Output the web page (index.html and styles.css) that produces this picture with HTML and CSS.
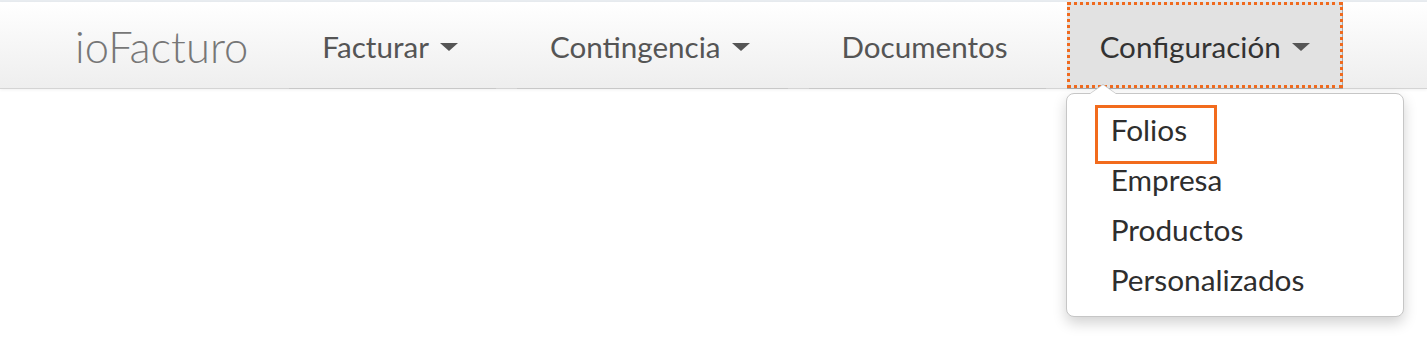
FILE: index.html
```html
<!DOCTYPE html>
<html lang="es">
<head>
<meta charset="utf-8">
<title>ioFacturo</title>
<link rel="stylesheet" href="styles.css">
</head>
<body>
<div class="topband"></div>
<nav class="navbar">
  <a class="brand" href="#">ioFacturo</a>
  <ul class="nav">
    <li class="nav-item"><a href="#">Facturar<span class="caret"></span></a></li>
    <li class="nav-item"><a href="#">Contingencia<span class="caret"></span></a></li>
    <li class="nav-item"><a href="#">Documentos</a></li>
    <li class="nav-item active"><a href="#">Configuración<span class="caret"></span></a>
      <ul class="dropdown">
        <li class="dd-item highlighted"><a href="#">Folios</a><span class="annot"></span></li>
        <li class="dd-item"><a href="#">Empresa</a></li>
        <li class="dd-item"><a href="#">Productos</a></li>
        <li class="dd-item"><a href="#">Personalizados</a></li>
      </ul>
    </li>
  </ul>
</nav>
</body>
</html>
```

FILE: styles.css
```css
* { box-sizing: border-box; }
html, body { margin: 0; padding: 0; background: #fff; }
body { font-family: Lato, "Open Sans", sans-serif; width: 1427px; height: 352px; overflow: hidden; }
a { text-decoration: none; color: inherit; }
ul { list-style: none; margin: 0; padding: 0; }

.topband { height: 2px; background: #e8ecf0; }

.navbar {
  display: flex;
  align-items: stretch;
  height: 87px;
  padding-left: 75px;
  background: linear-gradient(#ffffff 0%, #f8f8f8 40%, #eeeeee 100%);
  border-bottom: 1px solid #d4d4d4;
  box-shadow: 0 1px 3px rgba(0,0,0,0.06);
}

.brand {
  font-weight: 300;
  font-size: 43.5px;
  color: #777;
  line-height: 88px;
  margin-right: 41px;
}

.nav { display: flex; gap: 21px; }

.nav-item { position: relative; border-bottom: 1px solid #c8c8c8; margin-bottom: -1px; }
.nav-item > a {
  display: flex;
  align-items: center;
  height: 86px;
  padding: 3px 38px 0 33px;
  font-size: 29.6px;
  color: #555;
}

.caret {
  display: inline-block;
  width: 0; height: 0;
  margin-left: 11px;
  border-left: 9px solid transparent;
  border-right: 9px solid transparent;
  border-top: 8px solid #555;
}

.nav-item.active { border-bottom-color: #a8a8a8; }
.nav-item.active > a {
  background: #e2e2e2;
  color: #333;
  padding-left: 33px;
  padding-right: 33px;
  outline: 3px dotted #f06a1e;
  outline-offset: -3px;
  box-shadow: inset -1px 0 0 #a8a8a8;
}

.dropdown {
  position: absolute;
  top: 91px;
  left: -1px;
  width: 338px;
  padding: 11px 0;
  background: #fff;
  border: 1px solid #c6c6c6;
  border-radius: 8px;
  box-shadow: 0 6px 14px rgba(0,0,0,0.18);
}
.dropdown::before {
  content: "";
  position: absolute;
  top: -10px;
  left: 22px;
  border-left: 14px solid transparent;
  border-right: 14px solid transparent;
  border-bottom: 10px solid #c6c6c6;
}
.dropdown::after {
  content: "";
  position: absolute;
  top: -9px;
  left: 23px;
  border-left: 13px solid transparent;
  border-right: 13px solid transparent;
  border-bottom: 9px solid #fff;
}

.dd-item { position: relative; }
.dd-item a {
  display: block;
  height: 50px;
  line-height: 50px;
  padding-left: 44px;
  font-size: 29.8px;
  color: #2e2e2e;
}

.annot {
  position: absolute;
  left: 28px;
  top: 0;
  width: 122px;
  height: 59px;
  border: 3px solid #f26b1d;
}
```
